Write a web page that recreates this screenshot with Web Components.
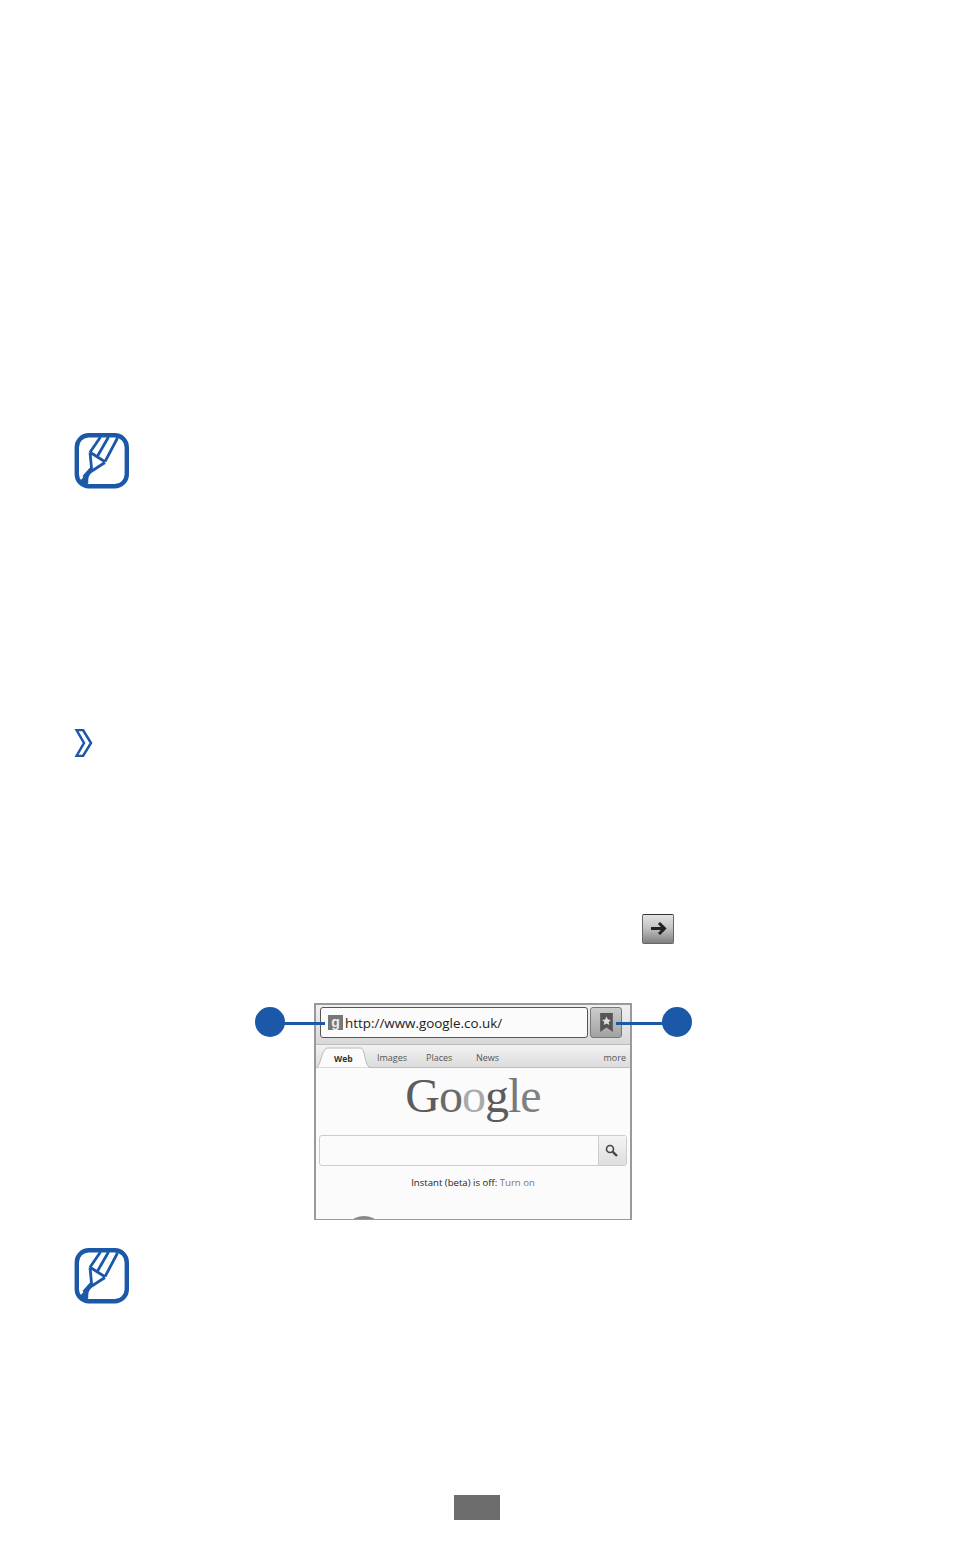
<!DOCTYPE html>
<html>
<head>
<meta charset="utf-8">
<title>Browser page</title>
<style>
    html, body { margin: 0; padding: 0; background: #fff; }
    body { font-family: "Open Sans", "Liberation Sans", sans-serif; }
    main-page { display: block; }
</style>
</head>
<body>
<main-page>
    <note-icon slot="first"></note-icon>
    <chevron-mark slot="second"></chevron-mark>
    <go-button slot="third"></go-button>
    <browser-figure slot="fourth"></browser-figure>
    <note-icon slot="fifth"></note-icon>
    <page-number slot="sixth"></page-number>
</main-page>
<script>
/**
 * Page sheet: the blocks stand in a column, with the white space of the page between them.
 */
class MainPage extends HTMLElement
{
    constructor()
    {
        super();
        this.attachShadow({mode: 'open'}).innerHTML = `
            <style>
                :host { display: block; width: 954px; height: 1564px; box-sizing: border-box; padding: 433px 0 0 74px; }
                .col { display: flex; flex-direction: column; align-items: flex-start; }
                .s2 { margin-top: 240px; }
                .s3 { margin-top: 157px; margin-left: 568px; }
                .s4 { margin-top: 59px; margin-left: 240px; }
                .s5 { margin-top: 28px; }
                .s6 { margin-top: 191px; margin-left: 380px; }
            </style>
            <div class="col">
                <slot name="first"></slot>
                <div class="s2"><slot name="second"></slot></div>
                <div class="s3"><slot name="third"></slot></div>
                <div class="s4"><slot name="fourth"></slot></div>
                <div class="s5"><slot name="fifth"></slot></div>
                <div class="s6"><slot name="sixth"></slot></div>
            </div>`;
    }
}
customElements.define('main-page', MainPage);


class NoteIcon extends HTMLElement
{
    constructor()
    {
        super();
        this.attachShadow({mode: 'open'}).innerHTML = `
            <style>
                :host { display: block; width: 56px; height: 56px; }
                svg { display: block; }
            </style>
            <svg width="56" height="56" viewBox="0 0 56 56" fill="none" stroke="#1b58a8" stroke-width="2.8" stroke-linejoin="round">
                <rect x="2.8" y="2.2" width="50" height="51" rx="12" stroke-width="4.4"/>
                <path d="M16 19.3 26.5 4M23 24 34.5 4M31 28.7 43.5 5"/>
                <path d="M16 19.3 31 28.7M16 19.3 17.5 35 9.5 44M31 29.5 17 38.5Q12 42 13 50"/>
                <path d="M9.5 44Q6 47 5 51L14 51Q12 46 13.5 43Z" fill="#1b58a8" stroke="none"/>
            </svg>`;
    }
}
customElements.define('note-icon', NoteIcon);


class ChevronMark extends HTMLElement
{
    constructor()
    {
        super();
        this.attachShadow({mode: 'open'}).innerHTML = `
            <style>
                :host { display: block; width: 19px; height: 28px; }
                svg { display: block; }
            </style>
            <svg width="19" height="28" viewBox="0 0 19 28">
                <path d="M2.5 1 9 1 17 14 9 27 2.5 27 10 14Z" fill="#fff" stroke="#1b58a8" stroke-width="2.5"/>
            </svg>`;
    }
}
customElements.define('chevron-mark', ChevronMark);


class GoButton extends HTMLElement
{
    constructor()
    {
        super();
        this.attachShadow({mode: 'open'}).innerHTML = `
            <style>
                :host { display: block; width: 32px; height: 30px; box-sizing: border-box;
                    border: 1px solid #666; border-top-color: #333; border-radius: 2px;
                    background: linear-gradient(180deg, #e2e2e2 0%, #c4c4c4 45%, #808080 100%); }
                svg { display: block; margin: 6px 0 0 7px; }
            </style>
            <svg width="17" height="15" viewBox="0 0 17 15" fill="none" stroke="#222" stroke-width="3">
                <path d="M1 7.5H14M9 2l5.5 5.5L9 13"/>
            </svg>`;
    }
}
customElements.define('go-button', GoButton);


class BrowserFigure extends HTMLElement
{
    constructor()
    {
        super();
        this.attachShadow({mode: 'open'}).innerHTML = `
            <style>
                :host { display: block; width: 318px; height: 217px; position: relative; }
                .frame { width: 318px; height: 217px; box-sizing: border-box; border: 2px solid #999;
                    border-bottom-width: 1px; overflow: hidden; position: relative; background: #fbfbfb;
                    display: flex; flex-direction: column; font-family: "Open Sans", sans-serif; }
                .address { height: 40px; flex: none; box-sizing: border-box; padding: 2px 8px 0 4px; display: flex; gap: 2px;
                    background: linear-gradient(180deg, #f0f0f0, #d8d8d8); border-bottom: 1px solid #bbb; }
                .url { width: 268px; height: 31px; box-sizing: border-box; border: 1px solid #555; border-radius: 3px;
                    background: #fbfbfb; display: flex; align-items: center; padding-left: 7px; gap: 2px;
                    font-size: 13.4px; color: #222; white-space: nowrap; }
                .fav { width: 15px; height: 15px; flex: none; background: #777; color: #eee;
                    font: bold 14px/14px "Liberation Sans", sans-serif; text-align: center; }
                .mark { width: 32px; height: 31px; box-sizing: border-box; border: 1px solid #777; border-radius: 3px;
                    background: linear-gradient(180deg, #ccc, #a2a2a2); display: flex; align-items: center; justify-content: center; }
                .tabs { height: 23px; flex: none; box-sizing: border-box; display: flex; align-items: flex-end; position: relative;
                    background: linear-gradient(180deg, #f2f2f2, #dcdcdc); border-bottom: 1px solid #bdbdbd;
                    font-size: 9px; color: #555; }
                .tab-shape { position: absolute; left: 0; top: 2px; }
                .tabs span { position: absolute; top: 7px; line-height: 12px; }
                .tabs .web { left: 18px; top: 8px; font-size: 8.5px; font-weight: 700; color: #333; }
                .logo { height: 67px; flex: none; box-sizing: border-box; text-align: center;
                    font: 48px/56px "Liberation Serif", serif; letter-spacing: -1px; white-space: nowrap; }
                .search { margin: 0 3px 0 3px; height: 31px; flex: none; box-sizing: border-box; border: 1px solid #ccc; border-radius: 3px;
                    display: flex; justify-content: flex-end; background: #fbfbfb; }
                .btn { width: 28px; padding-right: 2px; box-sizing: border-box; border-left: 1px solid #ccc; background: linear-gradient(180deg, #f4f4f4, #dedede);
                    display: flex; align-items: center; justify-content: center; }
                .instant { margin-top: 10px; text-align: center; font-size: 9.6px; line-height: 14px; color: #222; white-space: nowrap; }
                .instant b { font-weight: 400; color: #777; }
                .arc { position: absolute; left: 36px; bottom: -9px; width: 24px; height: 12px; border-radius: 50%; background: #888; }
                .dot { position: absolute; top: 4px; width: 30px; height: 30px; border-radius: 50%; background: #1b58a8; }
                .line { position: absolute; top: 19px; height: 2.5px; background: #1b58a8; }
            </style>
            <div class="frame">
                <div class="address">
                    <div class="url"><span class="fav">g</span><span>http://www.google.co.uk/</span></div>
                    <div class="mark">
                        <svg width="13" height="19" viewBox="0 0 14 21">
                            <path d="M0 0H14V21L7 16 0 21Z" fill="#555"/>
                            <path d="M7 4l1.5 3.2 3.4.4-2.5 2.3.7 3.4L7 11.6l-3.1 1.7.7-3.4-2.5-2.3 3.4-.4Z" fill="#ddd"/>
                        </svg>
                    </div>
                </div>
                <div class="tabs">
                    <svg class="tab-shape" width="60" height="21" viewBox="0 0 60 21">
                        <path d="M0 21C5 20 5 3 11 1H45C50 3 48 20 55 21Z" fill="#fbfbfb" stroke="#bbb"/>
                    </svg>
                    <span class="web">Web</span>
                    <span style="left:61px">Images</span>
                    <span style="left:110px">Places</span>
                    <span style="left:160px">News</span>
                    <span style="right:4px">more</span>
                </div>
                <div class="logo"><span style="color:#5c5c5c">G</span><span style="color:#6a6a6a">o</span><span style="color:#aaa">o</span><span style="color:#5c5c5c">g</span><span style="color:#777">l</span><span style="color:#808080">e</span></div>
                <div class="search">
                    <div class="btn">
                        <svg width="13" height="13" viewBox="0 0 13 13" fill="none" stroke="#444">
                            <circle cx="5" cy="5" r="3.5" stroke-width="1.6"/>
                            <path d="M7.8 7.8 12 12" stroke-width="2.4"/>
                        </svg>
                    </div>
                </div>
                <div class="instant">Instant (beta) is off: <b>Turn on</b></div>
                <div class="arc"></div>
            </div>
            <div class="line" style="left:-30px;width:41px"></div>
            <div class="dot" style="left:-59px"></div>
            <div class="line" style="left:302px;width:47px"></div>
            <div class="dot" style="left:348px"></div>`;
    }
}
customElements.define('browser-figure', BrowserFigure);


class PageNumber extends HTMLElement
{
    constructor()
    {
        super();
        this.attachShadow({mode: 'open'}).innerHTML = `
            <style>
                :host { display: block; width: 46px; height: 25px; background: #6d6d6d; }
            </style>`;
    }
}
customElements.define('page-number', PageNumber);
</script>
</body>
</html>
